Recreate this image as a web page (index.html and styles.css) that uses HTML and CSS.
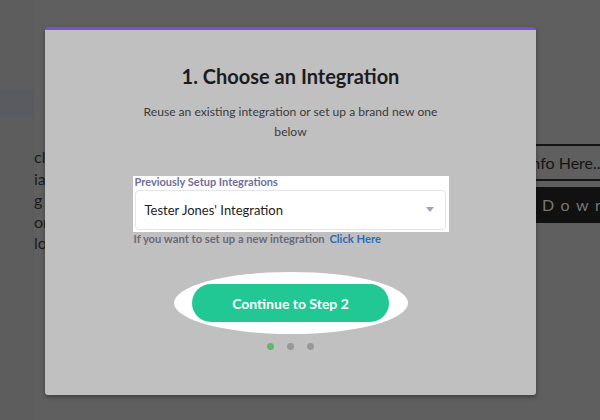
FILE: index.html
```html
<!DOCTYPE html>
<html>
<head>
<meta charset="utf-8">
<link rel="stylesheet" href="styles.css">
</head>
<body>
<div class="page">
  <aside class="sidebar">
    <div class="side-item active"></div>
  </aside>
  <main class="content">
    <div class="text-col">
      <p class="line">click the</p>
      <p class="line">ia the</p>
      <p class="line">g c</p>
      <p class="line">or</p>
      <p class="line">lo</p>
    </div>
    <div class="form-col">
      <div class="info-input">Info Here...</div>
      <div class="download">Download</div>
    </div>
  </main>

  <div class="modal">
    <h1 class="title">1. Choose an Integration</h1>
    <p class="subtitle">Reuse an existing integration or set up a brand new one below</p>
    <div class="field highlight">
      <label class="field-label">Previously Setup Integrations</label>
      <div class="select">
        <span>Tester Jones' Integration</span>
        <span class="caret"></span>
      </div>
    </div>
    <p class="help">If you want to set up a new integration <a class="link">Click Here</a></p>
    <div class="btn-halo">
      <button class="btn">Continue to Step 2</button>
    </div>
    <div class="dots">
      <span class="dot on"></span>
      <span class="dot"></span>
      <span class="dot"></span>
    </div>
  </div>
</div>
</body>
</html>
```
FILE: styles.css
```css
* { box-sizing: border-box; }
html, body { margin: 0; padding: 0; }
body {
  width: 600px;
  height: 420px;
  overflow: hidden;
  background: #5f5f5f;
  font-family: Lato, "Open Sans", sans-serif;
}
.page {
  position: relative;
  width: 600px;
  height: 420px;
  display: flex;
}
.sidebar {
  width: 34px;
  flex: none;
  background: #5d5d5d;
  border-right: 1px solid #5a5a5a;
  padding-top: 90px;
}
.side-item {
  height: 27px;
}
.side-item.active { background: #5a5b60; }

.content {
  flex: 1;
  display: flex;
  justify-content: space-between;
  overflow: hidden;
}
.text-col {
  padding-top: 146px;
  width: 120px;
}
.line {
  margin: 0;
  font-size: 16px;
  line-height: 21.5px;
  color: #1c1c1c;
  white-space: nowrap;
}
.form-col {
  width: 70px;
  padding-top: 144px;
}
.info-input {
  height: 37px;
  border-top: 2px solid #151515;
  border-bottom: 2px solid #151515;
  font-size: 16px;
  line-height: 33px;
  color: #151515;
  white-space: nowrap;
  margin-left: -3px;
}
.download {
  margin-top: 6px;
  height: 36px;
  background: #111;
  color: #777;
  font-size: 16px;
  line-height: 36px;
  letter-spacing: 6.5px;
  padding-left: 12px;
  white-space: nowrap;
}

.modal {
  position: absolute;
  left: 45px;
  top: 27px;
  width: 491px;
  height: 368px;
  background: #c0c0c0;
  border-top: 3px solid #7a52cc;
  border-radius: 3px;
  box-shadow: 0 2px 4px rgba(0,0,0,0.35);
  display: flex;
  flex-direction: column;
  align-items: center;
  padding-top: 34px;
}
.title {
  margin: 0;
  font-size: 20px;
  line-height: 24px;
  font-weight: 700;
  color: #1c1c20;
}
.subtitle {
  margin: 14px 0 0;
  max-width: 300px;
  text-align: center;
  font-size: 12.1px;
  line-height: 20px;
  color: #3a3a3c;
}
.field {
  margin-top: 34px;
  width: 316px;
  background: #fff;
  padding: 0 3px 2px 2px;
}
.field-label {
  display: block;
  font-size: 11px;
  line-height: 12px;
  font-weight: 700;
  color: #6f6e9e;
}
.select {
  margin-top: 2px;
  height: 40px;
  border: 1px solid #e4e4ef;
  border-radius: 4px;
  display: flex;
  align-items: center;
  justify-content: space-between;
  padding: 0 11px 0 9px;
  font-size: 13px;
  color: #222;
}
.caret {
  width: 0;
  height: 0;
  border-left: 4px solid transparent;
  border-right: 4px solid transparent;
  border-top: 5px solid #a3a3b3;
  margin-top: -2px;
}
.help {
  margin: 0;
  width: 316px;
  padding-left: 1px;
  font-size: 11.2px;
  line-height: 14px;
  font-weight: 700;
  color: #6a6a78;
}
.link {
  color: #2d6db8;
  margin-left: 2px;
}
.btn-halo {
  margin-top: 26px;
  width: 234px;
  height: 62px;
  border-radius: 50%;
  background: #fff;
  display: flex;
  align-items: center;
  justify-content: center;
}
.btn {
  width: 197px;
  height: 38px;
  border: none;
  border-radius: 19px;
  background: #22c894;
  color: #fff;
  font-family: Lato, "Open Sans", sans-serif;
  font-size: 14px;
  font-weight: 700;
  padding: 0;
}
.dots {
  margin-top: 9px;
  display: flex;
  gap: 13px;
}
.dot {
  width: 7px;
  height: 7px;
  border-radius: 50%;
  background: #989898;
}
.dot.on { background: #62b866; }
```
